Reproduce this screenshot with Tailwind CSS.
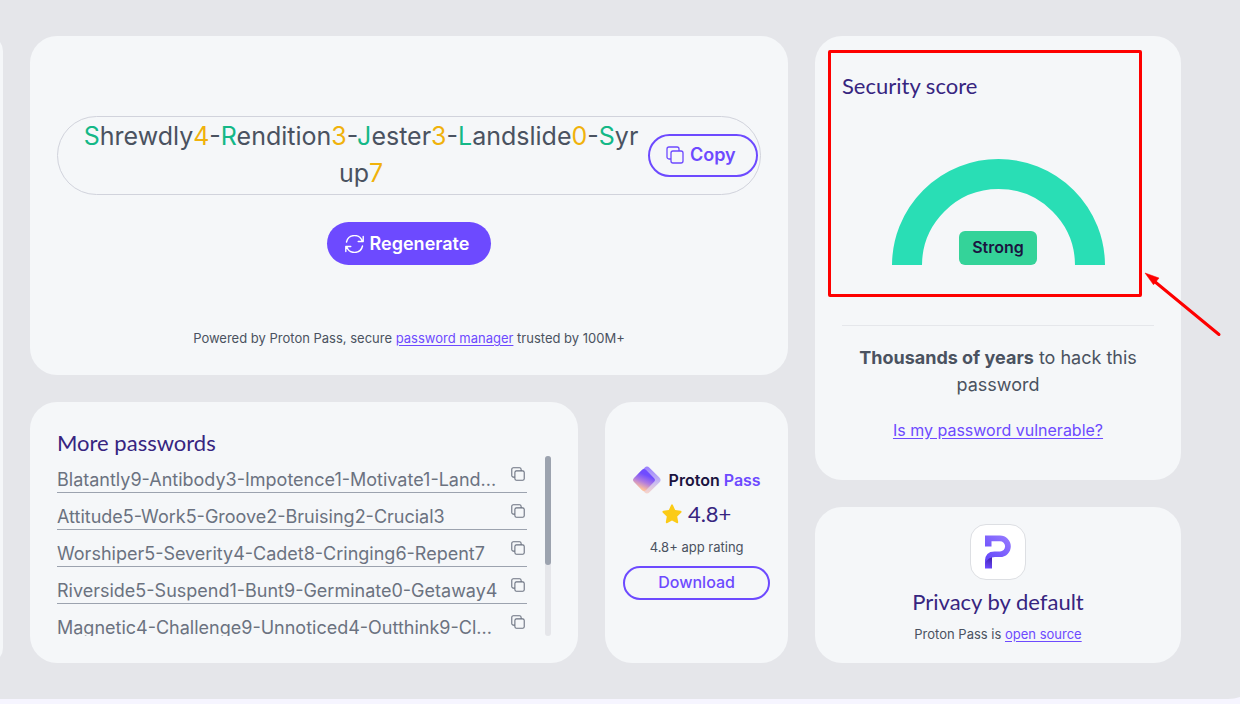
<!DOCTYPE html>
<html lang="en">
<head>
    <meta charset="UTF-8">
    <meta name="viewport" content="width=device-width, initial-scale=1.0">
    <title>Password generator</title>
    <script src="https://cdn.jsdelivr.net/npm/@tailwindcss/browser@4"></script>
</head>
<body class="bg-[#f6f5ff] font-['Inter',sans-serif] text-[#4a5260] overflow-x-hidden">

    <!-- shared icons -->
    <svg class="hidden">
        <symbol id="copy" viewBox="0 0 18 18" fill="none" stroke="currentColor">
            <path d="M5 13H3a2 2 0 0 1-2-2V3a2 2 0 0 1 2-2h8a2 2 0 0 1 2 2v2"/>
            <rect x="5" y="5" width="12" height="12" rx="2"/>
        </symbol>
    </svg>

    <main class="-mt-1 -mr-6 -ml-[27px] flex min-h-[calc(100vh-1px)] gap-[27px] rounded-r-[36px] bg-[#e5e6ea] pt-10 pr-[83px] pb-9">
        <aside class="w-[30px] shrink-0 rounded-[27px] bg-[#f5f7f9]"></aside>

        <div class="flex min-w-0 flex-1 flex-col gap-[27px]">
            <section class="flex flex-1 flex-col items-center rounded-[27px] bg-[#f5f7f9] px-[27px] pt-20 pb-7">
                <div class="flex w-full items-center gap-1 rounded-[40px] border border-[#d1d3dc] pt-px pr-[2px] pb-[2px] pl-5">
                    <p class="flex-1 text-center text-[25px] leading-[37px] break-all"><span class="text-[#14b887]">S</span>hrewdly<span class="text-[#f0b20c]">4</span>-<span class="text-[#14b887]">R</span>endition<span class="text-[#f0b20c]">3</span>-<span class="text-[#14b887]">J</span>ester<span class="text-[#f0b20c]">3</span>-<span class="text-[#14b887]">L</span>andslide<span class="text-[#f0b20c]">0</span>-<span class="text-[#14b887]">S</span>yrup<span class="text-[#f0b20c]">7</span></p>
                    <button class="flex h-[43px] w-[110px] shrink-0 items-center gap-[6px] rounded-full border-2 border-[#6d4aff] pl-4 text-lg font-semibold text-[#6d4aff]">
                        <svg class="size-[18px]"><use href="#copy" stroke-width="1.3"/></svg>
                        Copy
                    </button>
                </div>
                <button class="mt-[27px] flex h-[43px] items-center gap-[6px] rounded-full bg-[#6d4aff] pr-[22px] pl-[18px] text-lg font-semibold text-white">
                    <svg class="h-[18px] w-[19px]" viewBox="0 0 19 18" fill="none" stroke="currentColor" stroke-width="1.4" stroke-linecap="round" stroke-linejoin="round">
                        <path d="M1.500 7a8.200 8.200 0 0 1 15.800-.8M18.200 1.500v5h-5"/>
                        <path d="M17.500 11a8.200 8.200 0 0 1-15.800.8M.8 16.500v-5h5"/>
                    </svg>
                    Regenerate
                </button>
                <p class="mt-auto text-[13px] leading-[18px]">Powered by Proton Pass, secure <a href="#" class="text-[#6d4aff] underline underline-offset-2">password manager</a> trusted by 100M+</p>
            </section>

            <div class="grid grid-cols-[3fr_1fr] gap-[27px]">
                <section class="rounded-[27px] bg-[#f5f7f9] p-[27px]">
                    <h2 class="font-['Lato',sans-serif] text-[22px] leading-[27px] text-[#372580]">More passwords</h2>
                    <div class="flex h-[180px] justify-between overflow-hidden text-[#6b7280]">
                        <ul class="w-[470px] text-lg leading-[27px]">
                            <li class="flex h-[37px] justify-between border-b border-[#9ca3af] pt-[10px]">Blatantly9-Antibody3-Impotence1-Motivate1-Land...<button aria-label="Copy" class="mr-[2px] h-4"><svg class="size-[14px]"><use href="#copy" stroke-width="1.4"/></svg></button></li>
                            <li class="flex h-[37px] justify-between border-b border-[#9ca3af] pt-[10px]">Attitude5-Work5-Groove2-Bruising2-Crucial3<button aria-label="Copy" class="mr-[2px] h-4"><svg class="size-[14px]"><use href="#copy" stroke-width="1.4"/></svg></button></li>
                            <li class="flex h-[37px] justify-between border-b border-[#9ca3af] pt-[10px]">Worshiper5-Severity4-Cadet8-Cringing6-Repent7<button aria-label="Copy" class="mr-[2px] h-4"><svg class="size-[14px]"><use href="#copy" stroke-width="1.4"/></svg></button></li>
                            <li class="flex h-[37px] justify-between border-b border-[#9ca3af] pt-[10px]">Riverside5-Suspend1-Bunt9-Germinate0-Getaway4<button aria-label="Copy" class="mr-[2px] h-4"><svg class="size-[14px]"><use href="#copy" stroke-width="1.4"/></svg></button></li>
                            <li class="flex h-[37px] justify-between border-b border-[#9ca3af] pt-[10px]">Magnetic4-Challenge9-Unnoticed4-Outthink9-Cl...<button aria-label="Copy" class="mr-[2px] h-4"><svg class="size-[14px]"><use href="#copy" stroke-width="1.4"/></svg></button></li>
                        </ul>
                        <div class="h-full w-[6px] rounded-full bg-[#e5e6ea]">
                            <div class="h-[109px] rounded-full bg-[#9ca3af]"></div>
                        </div>
                    </div>
                </section>

                <section class="flex flex-col items-center justify-center rounded-[27px] bg-[#f5f7f9] px-[18px]">
                    <div class="flex items-center gap-2 text-base leading-6 font-semibold whitespace-nowrap text-[#1b1340]">
                        <svg class="size-7" viewBox="0 0 28 28">
                            <defs>
                                <linearGradient id="front" x1=".3" y1="0" x2=".7" y2="1">
                                    <stop offset=".2" stop-color="#704cff"/>
                                    <stop offset=".6" stop-color="#b07be0"/>
                                    <stop offset="1" stop-color="#ffc09a"/>
                                </linearGradient>
                                <linearGradient id="back" x1="0" y1="0" x2="1" y2="1">
                                    <stop offset="0" stop-color="#957aff"/>
                                    <stop offset=".6" stop-color="#c9bcf0"/>
                                    <stop offset="1" stop-color="#ffd9c4"/>
                                </linearGradient>
                            </defs>
                            <rect x="3.500" y="3.500" width="21" height="21" rx="3.500" fill="url(#back)" transform="rotate(45 14 14)"/>
                            <rect x="2.500" y="5.500" width="17" height="17" rx="3" fill="url(#front)" transform="rotate(45 11 14)"/>
                        </svg>
                        <span class="pt-px">Proton <span class="text-[#6d4aff]">Pass</span></span>
                    </div>
                    <div class="mt-2 flex items-center gap-[6px] font-['Lato',sans-serif] text-[22px] leading-6 text-[#372580]">
                        <svg class="size-5" viewBox="0 0 20 20" fill="#fbcb16"><path d="M9 1.200q1-1.700 2 0l2.200 4.900 5.300.7q1.800.4.600 1.900l-3.900 3.800 1 5.400q.1 1.900-1.600 1.200L10 16.500l-4.600 2.600q-1.700.7-1.600-1.200l1-5.400L.900 8.700q-1.200-1.500.6-1.900l5.300-.7z"/></svg>
                        4.8+
                    </div>
                    <p class="mt-3 text-[13px] leading-[18px]">4.8+ app rating</p>
                    <button class="mt-[10px] h-[34px] w-full rounded-full border-2 border-[#6d4aff] pb-[2px] text-base leading-none font-medium text-[#6d4aff]">Download</button>
                </section>
            </div>
        </div>

        <div class="flex w-[366px] shrink-0 flex-col gap-[27px]">
            <section class="relative flex-1 rounded-[27px] bg-[#f5f7f9] px-[27px] pt-9 text-center">
                <h2 class="text-left font-['Lato',sans-serif] text-[22px] leading-7 text-[#372580]">Security score</h2>
                <div class="mt-[59px] grid justify-items-center">
                    <svg class="col-start-1 row-start-1 h-[106px] w-[213px]" viewBox="0 0 213 106" fill="none" stroke="#29deb5" stroke-width="30"><path d="M15 106.500a91.500 91.500 0 0 1 183 0"/></svg>
                    <strong class="col-start-1 row-start-1 self-end rounded-md bg-[#34d399] px-[13px] pt-1 pb-[6px] text-base leading-6 font-semibold text-[#1b1340]">Strong</strong>
                </div>
                <hr class="mt-[60px] border-[#e5e7eb]">
                <p class="px-4 pt-[18px] text-lg leading-[27px]"><b class="font-bold">Thousands of years</b> to hack this password</p>
                <a href="#" class="mt-5 inline-block text-base leading-6 text-[#6d4aff] underline underline-offset-2">Is my password vulnerable?</a>

                <!-- callout around the score -->
                <div class="absolute top-[14px] left-[13px] h-[247px] w-[314px] rounded-xs border-3 border-[#fe0000]"></div>
                <svg class="absolute top-[235px] left-[329px] h-[66px] w-[78px]" viewBox="0 0 78 66"><path d="M10 10l65 53.500" stroke="#fe0000" stroke-width="3" stroke-linecap="round"/><path d="M1 2l14 5-5.500 6.800z" fill="#fe0000" stroke="#fe0000" stroke-width=".5"/></svg>
            </section>

            <section class="flex flex-col items-center rounded-[27px] bg-[#f5f7f9] pt-[17px] pb-[19px]">
                <div class="grid size-14 place-items-center rounded-2xl border border-[#dddfe3] bg-white">
                    <svg class="h-[34px] w-[26px]" viewBox="0 0 26 34">
                        <defs>
                            <linearGradient id="bowl" x1="24" y1="2" x2="4" y2="28" gradientUnits="userSpaceOnUse">
                                <stop offset="0" stop-color="#957aff"/>
                                <stop offset="1" stop-color="#6346fa"/>
                            </linearGradient>
                            <linearGradient id="stem" x1="6" y1="22" x2="2" y2="33" gradientUnits="userSpaceOnUse">
                                <stop offset="0" stop-color="#3d1fa8"/>
                                <stop offset="1" stop-color="#6d4aff"/>
                            </linearGradient>
                        </defs>
                        <path fill="url(#stem)" d="M0 26q1-5 7-6v13.500H0z"/>
                        <path fill="url(#bowl)" d="M0 .5h15a10.800 10.800 0 0 1 0 21.600H10Q3 22.100 0 28.500V26q0-9.600 9.500-9.600H15a5 5 0 0 0 0-10.200H6.500v5.300H0z"/>
                    </svg>
                </div>
                <h2 class="mt-2 font-['Lato',sans-serif] text-[22px] leading-7 text-[#372580]">Privacy by default</h2>
                <p class="mt-2 text-[13px] leading-5">Proton Pass is <a href="#" class="text-[#6d4aff] underline underline-offset-2">open source</a></p>
            </section>
        </div>
    </main>

</body>
</html>
